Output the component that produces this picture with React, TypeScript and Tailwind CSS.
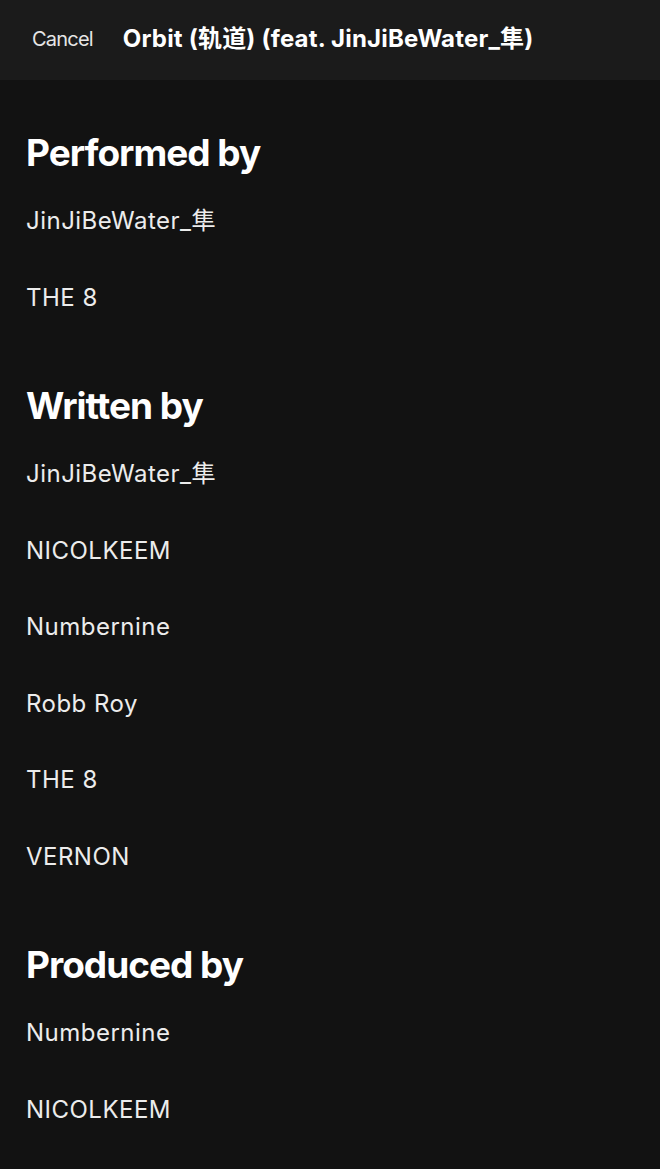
import React from "react";

const font = { fontFamily: '"Inter", "Noto Sans CJK SC", sans-serif' };

const sections: { title: string; items: string[] }[] = [
  { title: "Performed by", items: ["JinJiBeWater_隼", "THE 8"] },
  {
    title: "Written by",
    items: ["JinJiBeWater_隼", "NICOLKEEM", "Numbernine", "Robb Roy", "THE 8", "VERNON"],
  },
  { title: "Produced by", items: ["Numbernine", "NICOLKEEM"] },
];

export default function App() {
  return (
    <div className="w-[660px] h-[1169px] overflow-hidden bg-[#121212] text-white" style={font}>
      <div className="h-[80px] bg-[#1b1b1b] flex items-center pl-[32px] pb-[3px]">
        <span className="text-[20px] text-[#e6e6e6] tracking-[-0.04em]">Cancel</span>
        <span className="ml-[30px] text-[24px] font-bold tracking-[0.008em]">
          Orbit (轨道) (feat. JinJiBeWater_隼)
        </span>
      </div>
      <div className="px-[26px] pt-[51px] flex flex-col gap-[48px]">
        {sections.map((s) => (
          <div key={s.title} className="flex flex-col">
            <h2 className="h-[44px] leading-[44px] text-[37px] font-bold tracking-[-0.027em]">
              {s.title}
            </h2>
            <div className="h-[8px]" />
            {s.items.map((it, i) => (
              <div
                key={i}
                className="h-[76.5px] flex items-center text-[24px] text-[#ececec] tracking-[0.02em]"
              >
                {it}
              </div>
            ))}
          </div>
        ))}
      </div>
    </div>
  );
}
